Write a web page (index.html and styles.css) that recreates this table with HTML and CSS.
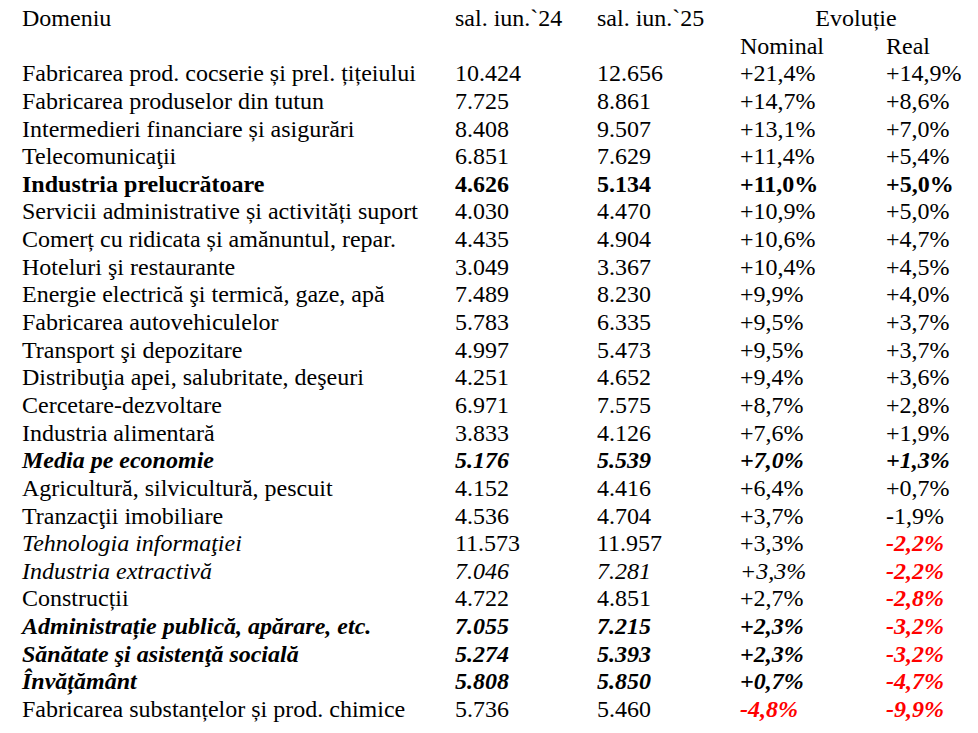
FILE: index.html
```html
<!DOCTYPE html>
<html lang="ro">
<head>
<meta charset="utf-8">
<link rel="stylesheet" href="styles.css">
</head>
<body>
<div class="table">
  <div class="row"><span>Domeniu</span><span>sal. iun.`24</span><span>sal. iun.`25</span><span class="span2">Evoluție</span></div>
  <div class="row"><span></span><span></span><span></span><span>Nominal</span><span>Real</span></div>
  <div class="row"><span>Fabricarea prod. cocserie și prel. țițeiului</span><span>10.424</span><span>12.656</span><span>+21,4%</span><span>+14,9%</span></div>
  <div class="row"><span>Fabricarea produselor din tutun</span><span>7.725</span><span>8.861</span><span>+14,7%</span><span>+8,6%</span></div>
  <div class="row"><span>Intermedieri financiare și asigurări</span><span>8.408</span><span>9.507</span><span>+13,1%</span><span>+7,0%</span></div>
  <div class="row"><span>Telecomunicaţii</span><span>6.851</span><span>7.629</span><span>+11,4%</span><span>+5,4%</span></div>
  <div class="row b"><span>Industria prelucrătoare</span><span>4.626</span><span>5.134</span><span>+11,0%</span><span>+5,0%</span></div>
  <div class="row"><span>Servicii administrative și activități suport</span><span>4.030</span><span>4.470</span><span>+10,9%</span><span>+5,0%</span></div>
  <div class="row"><span>Comerț cu ridicata și amănuntul, repar.</span><span>4.435</span><span>4.904</span><span>+10,6%</span><span>+4,7%</span></div>
  <div class="row"><span>Hoteluri şi restaurante</span><span>3.049</span><span>3.367</span><span>+10,4%</span><span>+4,5%</span></div>
  <div class="row"><span>Energie electrică şi termică, gaze, apă</span><span>7.489</span><span>8.230</span><span>+9,9%</span><span>+4,0%</span></div>
  <div class="row"><span>Fabricarea autovehiculelor</span><span>5.783</span><span>6.335</span><span>+9,5%</span><span>+3,7%</span></div>
  <div class="row"><span>Transport şi depozitare</span><span>4.997</span><span>5.473</span><span>+9,5%</span><span>+3,7%</span></div>
  <div class="row"><span>Distribuţia apei, salubritate, deşeuri</span><span>4.251</span><span>4.652</span><span>+9,4%</span><span>+3,6%</span></div>
  <div class="row"><span>Cercetare-dezvoltare</span><span>6.971</span><span>7.575</span><span>+8,7%</span><span>+2,8%</span></div>
  <div class="row"><span>Industria alimentară</span><span>3.833</span><span>4.126</span><span>+7,6%</span><span>+1,9%</span></div>
  <div class="row bi"><span>Media pe economie</span><span>5.176</span><span>5.539</span><span>+7,0%</span><span>+1,3%</span></div>
  <div class="row"><span>Agricultură, silvicultură, pescuit</span><span>4.152</span><span>4.416</span><span>+6,4%</span><span>+0,7%</span></div>
  <div class="row"><span>Tranzacţii imobiliare</span><span>4.536</span><span>4.704</span><span>+3,7%</span><span>-1,9%</span></div>
  <div class="row"><span class="i">Tehnologia informaţiei</span><span>11.573</span><span>11.957</span><span>+3,3%</span><span class="neg">-2,2%</span></div>
  <div class="row i"><span>Industria extractivă</span><span>7.046</span><span>7.281</span><span>+3,3%</span><span class="neg">-2,2%</span></div>
  <div class="row"><span>Construcții</span><span>4.722</span><span>4.851</span><span>+2,7%</span><span class="neg">-2,8%</span></div>
  <div class="row bi"><span>Administrație publică, apărare, etc.</span><span>7.055</span><span>7.215</span><span>+2,3%</span><span class="neg">-3,2%</span></div>
  <div class="row bi"><span>Sănătate şi asistenţă socială</span><span>5.274</span><span>5.393</span><span>+2,3%</span><span class="neg">-3,2%</span></div>
  <div class="row bi"><span>Învățământ</span><span>5.808</span><span>5.850</span><span>+0,7%</span><span class="neg">-4,7%</span></div>
  <div class="row"><span>Fabricarea substanțelor și prod. chimice</span><span>5.736</span><span>5.460</span><span class="neg">-4,8%</span><span class="neg">-9,9%</span></div>
</div>
</body>
</html>
```
FILE: styles.css
```css
html, body {
  margin: 0;
  padding: 0;
  background: #ffffff;
}
body {
  font-family: "Liberation Serif", "Times New Roman", serif;
  font-size: 24px;
  color: #000000;
}
.table {
  padding: 5px 0 0 22px;
}
.row {
  display: grid;
  grid-template-columns: 433px 142px 143px 146px 90px;
  height: 27.65px;
  line-height: 27.65px;
  white-space: nowrap;
}
.span2 {
  grid-column: 4 / span 2;
  text-align: center;
  padding-right: 4px;
}
.b {
  font-weight: bold;
}
.bi {
  font-weight: bold;
  font-style: italic;
}
.i {
  font-style: italic;
}
.neg {
  color: #ff0000;
  font-weight: bold;
  font-style: italic;
}
```
